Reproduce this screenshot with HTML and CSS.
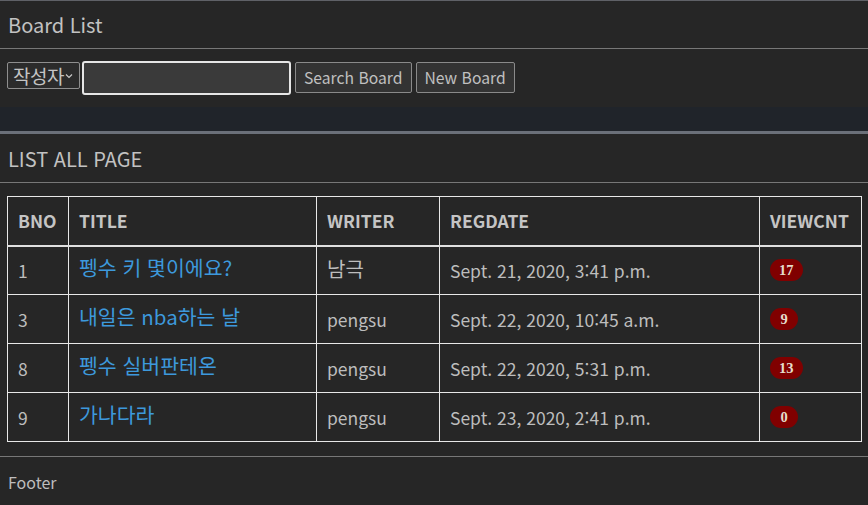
FILE: index.html
```html
<!DOCTYPE html>
<html lang="ko">
<head>
<meta charset="utf-8">
<title>Board List</title>
<link rel="stylesheet" href="styles.css">
</head>
<body>
<section class="box box-first">
  <div class="box-header"><h3 class="box-title">Board List</h3></div>
  <div class="box-body search-row">
    <div class="select"><span class="select-text">작성자</span><svg class="chev" width="8" height="6" viewBox="0 0 8 6"><path d="M1 1.5 L4 4.5 L7 1.5" fill="none" stroke="#c8c8c8" stroke-width="1.2"/></svg></div>
    <input class="keyword" type="text">
    <button class="btn">Search Board</button>
    <button class="btn">New Board</button>
  </div>
</section>
<div class="strip"></div>
<section class="box box-second">
  <div class="box-header tall"><h3 class="box-title upper">LIST ALL PAGE</h3></div>
  <div class="box-body table-wrap">
    <table class="board">
      <thead>
        <tr><th class="c-bno">BNO</th><th class="c-title">TITLE</th><th class="c-writer">WRITER</th><th class="c-date">REGDATE</th><th class="c-cnt">VIEWCNT</th></tr>
      </thead>
      <tbody>
        <tr><td>1</td><td><a href="#">펭수 키 몇이에요?</a></td><td><span class="ko">남극</span></td><td>Sept. 21, 2020, 3:41 p.m.</td><td><span class="badge">17</span></td></tr>
        <tr><td>3</td><td><a href="#">내일은 nba하는 날</a></td><td>pengsu</td><td>Sept. 22, 2020, 10:45 a.m.</td><td><span class="badge">9</span></td></tr>
        <tr><td>8</td><td><a href="#">펭수 실버판테온</a></td><td>pengsu</td><td>Sept. 22, 2020, 5:31 p.m.</td><td><span class="badge">13</span></td></tr>
        <tr><td>9</td><td><a href="#">가나다라</a></td><td>pengsu</td><td>Sept. 23, 2020, 2:41 p.m.</td><td><span class="badge">0</span></td></tr>
      </tbody>
    </table>
  </div>
  <footer class="box-footer">Footer</footer>
</section>
</body>
</html>
```
FILE: styles.css
```css
html, body {
  margin: 0;
  padding: 0;
  background: #262626;
  color: #bdbdbd;
  font-family: "Noto Sans CJK KR", "Noto Sans", sans-serif;
  font-size: 17.5px;
}
.box {
  background: #262626;
}
.box-first {
  border-top: 1px solid #5f6167;
}
.box-second {
  border-top: 3px solid #6b7079;
}
.box-header {
  height: 47px;
  border-bottom: 1px solid #777;
  display: flex;
  align-items: center;
  padding-left: 8px;
}
.box-header.tall {
  height: 48px;
}
.box-title {
  margin: 0;
  font-size: 20px;
  font-weight: 400;
  color: #c2c2c2;
}
.search-row {
  display: flex;
  align-items: center;
  padding: 12px 7px 12px;
  height: 34px;
}
.select {
  display: flex;
  align-items: center;
  box-sizing: border-box;
  width: 73px;
  height: 27px;
  padding: 0 0 0 5px;
  border: 1px solid #8e8e8e;
  border-radius: 2px;
  background: #2b2b2b;
  color: #c4c4c4;
  margin-top: -5px;
  margin-right: 2px;
  overflow: hidden;
}
.select-text {
  font-size: 19px;
  line-height: 1;
  letter-spacing: -0.5px;
}
.chev { margin-left: 1px; flex: none; }
.keyword {
  width: 205px;
  height: 30px;
  box-sizing: content-box;
  padding: 0;
  margin: 0 4px 0 0;
  border: 2px solid #e6e6e6;
  border-radius: 3px;
  background: #3a3a3a;
  outline: none;
}
.btn {
  height: 31px;
  padding: 0 8px;
  border: 1px solid #8a8a8a;
  border-radius: 2px;
  background: #333;
  color: #c0c0c0;
  font-family: inherit;
  font-size: 15.7px;
  margin-top: -2px;
}
.btn + .btn { margin-left: 4px; }
.strip {
  height: 24px;
  background: #20242a;
}
.table-wrap {
  padding: 13px 6px 14px 7px;
  border: 0;
}
.board {
  width: 100%;
  border-collapse: collapse;
  border: 1px solid #e8e8e8;
}
.board th, .board td {
  border: 1px solid #e8e8e8;
  text-align: left;
  padding: 0 10px;
  height: 49px;
  box-sizing: border-box;
}
.board th {
  font-weight: 700;
  color: #c4c4c4;
  border-bottom: 2px solid #e0e0e0;
}
.board td { color: #bdbdbd; }
.c-bno { width: 61px; }
.c-title { width: 248px; }
.c-writer { width: 123px; }
.c-date { width: 320px; }
.board a {
  color: #3d99dc;
  text-decoration: none;
  font-size: 20.5px;
  position: relative;
  top: -3px;
}
.ko {
  font-size: 20px;
  position: relative;
  top: -2px;
}
.badge {
  display: inline-block;
  position: relative;
  top: -2px;
  min-width: 10px;
  padding: 2px 9px;
  border-radius: 11px;
  background: #800000;
  color: #e5ddcc;
  font-family: "Liberation Serif", serif;
  font-weight: 700;
  font-size: 14.5px;
  line-height: 18px;
  text-align: center;
}
.box-footer {
  border-top: 1px solid #777;
  padding: 13px 8px;
  font-size: 16px;
  color: #bdbdbd;
}
```
